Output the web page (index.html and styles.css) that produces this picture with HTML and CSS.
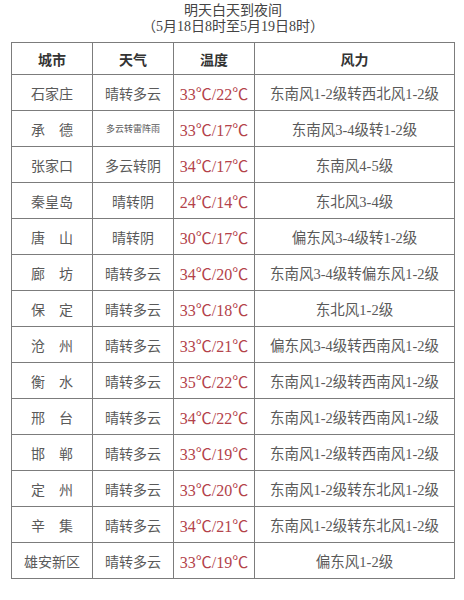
FILE: index.html
```html
<!DOCTYPE html>
<html lang="zh">
<head>
<meta charset="utf-8">
<title>明天白天到夜间</title>
<link rel="stylesheet" href="styles.css">
</head>
<body>
<div class="page">
  <header class="title">
    <div class="line">明天白天到夜间</div>
    <div class="line">（5月18日8时至5月19日8时）</div>
  </header>
  <table class="forecast">
    <colgroup>
      <col class="c-city"><col class="c-wx"><col class="c-temp"><col class="c-wind">
    </colgroup>
    <thead>
      <tr><th>城市</th><th>天气</th><th>温度</th><th>风力</th></tr>
    </thead>
    <tbody>
      <tr><td>石家庄</td><td>晴转多云</td><td class="temp">33℃/22℃</td><td class="wind">东南风1-2级转西北风1-2级</td></tr>
      <tr><td>承　德</td><td class="small">多云转雷阵雨</td><td class="temp">33℃/17℃</td><td class="wind">东南风3-4级转1-2级</td></tr>
      <tr><td>张家口</td><td>多云转阴</td><td class="temp">34℃/17℃</td><td class="wind">东南风4-5级</td></tr>
      <tr><td>秦皇岛</td><td>晴转阴</td><td class="temp">24℃/14℃</td><td class="wind">东北风3-4级</td></tr>
      <tr><td>唐　山</td><td>晴转阴</td><td class="temp">30℃/17℃</td><td class="wind">偏东风3-4级转1-2级</td></tr>
      <tr><td>廊　坊</td><td>晴转多云</td><td class="temp">34℃/20℃</td><td class="wind">东南风3-4级转偏东风1-2级</td></tr>
      <tr><td>保　定</td><td>晴转多云</td><td class="temp">33℃/18℃</td><td class="wind">东北风1-2级</td></tr>
      <tr><td>沧　州</td><td>晴转多云</td><td class="temp">33℃/21℃</td><td class="wind">偏东风3-4级转西南风1-2级</td></tr>
      <tr><td>衡　水</td><td>晴转多云</td><td class="temp">35℃/22℃</td><td class="wind">东南风1-2级转西南风1-2级</td></tr>
      <tr><td>邢　台</td><td>晴转多云</td><td class="temp">34℃/22℃</td><td class="wind">东南风1-2级转西南风1-2级</td></tr>
      <tr><td>邯　郸</td><td>晴转多云</td><td class="temp">33℃/19℃</td><td class="wind">东南风1-2级转西南风1-2级</td></tr>
      <tr><td>定　州</td><td>晴转多云</td><td class="temp">33℃/20℃</td><td class="wind">东南风1-2级转东北风1-2级</td></tr>
      <tr><td>辛　集</td><td>晴转多云</td><td class="temp">34℃/21℃</td><td class="wind">东南风1-2级转东北风1-2级</td></tr>
      <tr><td>雄安新区</td><td>晴转多云</td><td class="temp">33℃/19℃</td><td class="wind">偏东风1-2级</td></tr>
    </tbody>
  </table>
</div>
</body>
</html>
```

FILE: styles.css
```css
html, body {
  margin: 0;
  padding: 0;
  background: #ffffff;
}

body {
  font-family: "Liberation Serif", "Noto Sans CJK SC", serif;
  color: #555555;
}

.page {
  width: 464px;
  padding-top: 3px;
}

.title {
  text-align: center;
  font-size: 14px;
  line-height: 16px;
  color: #444444;
  margin-bottom: 7px;
  padding-left: 2px;
}

.forecast {
  margin-left: 11px;
  width: 443px;
  border-collapse: collapse;
  table-layout: fixed;
}

.c-city { width: 81px; }
.c-wx { width: 81px; }
.c-temp { width: 81px; }
.c-wind { width: 200px; }

.forecast th,
.forecast td {
  border: 1px solid #7c7c7c;
  text-align: center;
  vertical-align: middle;
  padding: 0;
  white-space: nowrap;
  overflow: hidden;
}

.forecast th {
  height: 31px;
  font-size: 14px;
  font-weight: bold;
  color: #333333;
}

.forecast td {
  height: 35px;
  font-size: 14px;
  color: #5a5a5a;
}

.forecast td.small {
  font-size: 9px;
}

.forecast td.temp {
  font-size: 16px;
  color: #b3424a;
}

.forecast td.wind {
  font-size: 14.5px;
}
```
